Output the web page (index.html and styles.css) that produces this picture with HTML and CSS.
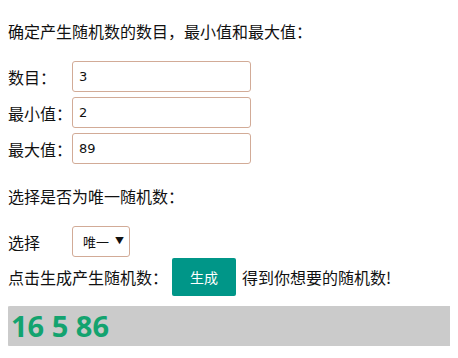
FILE: index.html
```html
<!DOCTYPE html>
<html lang="zh-CN">
<head>
    <meta charset="UTF-8">
    <meta name="viewport" content="width=device-width, initial-scale=1.0">
    <title>随机数生成</title>
    <link rel="stylesheet" href="styles.css">
</head>
<body>
    <div class="top-note">随机数</div>
    <p class="tip">确定产生随机数的数目，最小值和最大值：</p>
    <div class="field">
        <label for="count">数目：</label>
        <input type="text" id="count" value="3">
    </div>
    <div class="field">
        <label for="min">最小值：</label>
        <input type="text" id="min" value="2">
    </div>
    <div class="field">
        <label for="max">最大值：</label>
        <input type="text" id="max" value="89">
    </div>
    <p class="tip tip-unique">选择是否为唯一随机数：</p>
    <div class="field field-select">
        <label for="unique">选择</label>
        <span class="select-wrap">
            <select id="unique">
                <option>唯一</option>
                <option>不唯一</option>
            </select>
        </span>
    </div>
    <div class="action">
        <span>点击生成产生随机数：</span>
        <button id="gen-btn">生成</button>
        <span>得到你想要的随机数!</span>
    </div>
    <div id="result">16 5 86</div>
</body>
</html>
```

FILE: styles.css
```css
html {
    overflow: hidden;
}
body {
    margin: 8px;
    font-family: "Noto Sans CJK SC", "Noto Sans", sans-serif;
    font-size: 16px;
    line-height: 20px;
    color: #111;
}
.top-note {
    height: 20px;
    margin: -25px -30px 0 0;
    padding-right: 14px;
    text-align: right;
    line-height: 14px;
    font-size: 15px;
    font-weight: bold;
}
.tip {
    margin: 18px 0 20px;
}
.tip-unique {
    margin: 22px 0 20px;
}
.field {
    display: flex;
    align-items: center;
    margin-bottom: 5px;
}
.field label {
    width: 64px;
}
input[type="text"] {
    box-sizing: border-box;
    width: 179px;
    height: 31px;
    padding: 0 6px;
    border: 1px solid #d2ab97;
    border-radius: 3px;
    font-family: "DejaVu Sans", sans-serif;
    font-size: 13px;
    color: #111;
    outline: none;
}
.field-select {
    margin-bottom: 1px;
}
.select-wrap {
    position: relative;
    display: inline-block;
}
.select-wrap::after {
    content: "▼";
    position: absolute;
    right: 6px;
    top: 9px;
    font-size: 9px;
    line-height: 12px;
    color: #111;
    pointer-events: none;
}
select {
    appearance: none;
    box-sizing: border-box;
    width: 58px;
    height: 31px;
    padding: 0 0 0 10px;
    border: 1px solid #d2ab97;
    border-radius: 3px;
    background: #fff;
    font-family: "Noto Sans CJK SC", sans-serif;
    font-size: 13px;
    color: #111;
}
.action {
    display: flex;
    align-items: center;
}
#gen-btn {
    width: 64px;
    height: 38px;
    margin: 0 6px 0 4px;
    border: none;
    border-radius: 2px;
    background-color: #009688;
    color: #fff;
    font-family: "Noto Sans CJK SC", sans-serif;
    font-size: 14px;
    cursor: pointer;
}
#result {
    margin: 10px -30px 0 -1px;
    height: 40px;
    padding: 0 4px;
    background-color: #cbcbcb;
    border-radius: 3px 0 0 3px;
    font-family: "Open Sans", sans-serif;
    font-weight: bold;
    font-size: 29px;
    line-height: 40px;
    color: #13a36f;
}
```
